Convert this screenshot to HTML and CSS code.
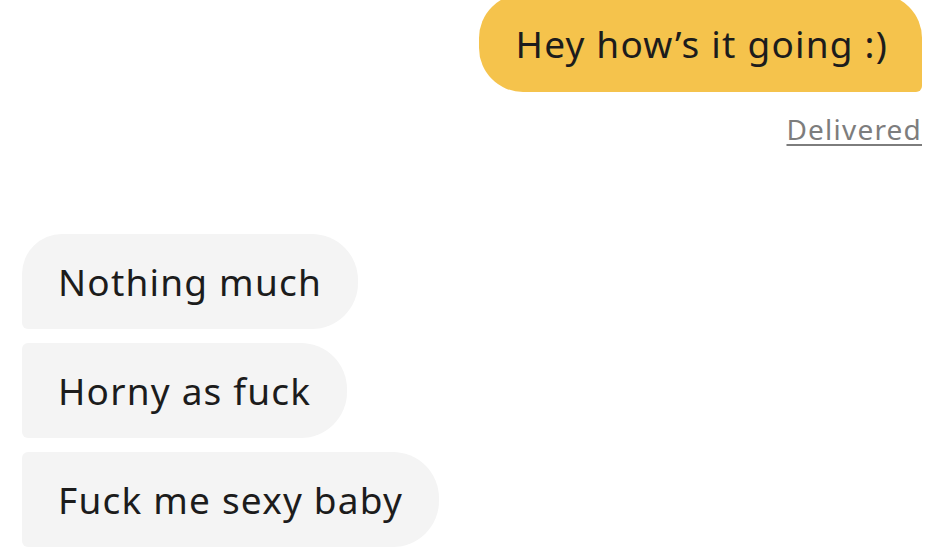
FILE: index.html
```html
<!DOCTYPE html>
<html lang="en">
<head>
  <meta charset="UTF-8">
  <meta name="viewport" content="width=device-width, initial-scale=1.0">
  <title>Chat</title>
  <link rel="stylesheet" href="styles.css">
</head>
<body>
  <div class="chat">
    <div class="sent">
      <div class="bubble bubble-me">Hey how’s it going :)</div>
      <span class="status">Delivered</span>
    </div>

    <div class="received">
      <div class="bubble bubble-them first">Nothing much</div>
      <div class="bubble bubble-them">Horny as fuck</div>
      <div class="bubble bubble-them last">Fuck me sexy baby</div>
    </div>
  </div>
</body>
</html>
```

FILE: styles.css
```css
body {
  margin: 0;
  background: #fff;
  font-family: "Noto Sans", sans-serif;
  color: #1c1c1c;
  overflow: hidden;
}
.chat {
  width: 940px;
  height: 548px;
  display: flex;
  flex-direction: column;
}
.sent {
  display: flex;
  flex-direction: column;
  align-items: flex-end;
  padding-right: 18px;
  margin-top: -6px;
}
.bubble {
  font-size: 37px;
  line-height: 40px;
  letter-spacing: 1.2px;
  box-sizing: border-box;
}
.bubble-me {
  background: #f5c34c;
  padding: 30px 34px 28px 37px;
  border-radius: 44px 44px 6px 44px;
}
.status {
  margin-top: 18px;
  font-size: 28px;
  letter-spacing: 1.2px;
  color: #7d7d7d;
  text-decoration: underline;
  text-decoration-thickness: 2px;
  text-underline-offset: 4px;
}
.received {
  display: flex;
  flex-direction: column;
  align-items: flex-start;
  gap: 14px;
  padding-left: 22px;
  margin-top: 86px;
}
.bubble-them {
  background: #f4f4f4;
  padding: 28px 36px 27px 36px;
  border-radius: 6px 46px 46px 6px;
}
.bubble-them.first {
  border-top-left-radius: 40px;
}
```
